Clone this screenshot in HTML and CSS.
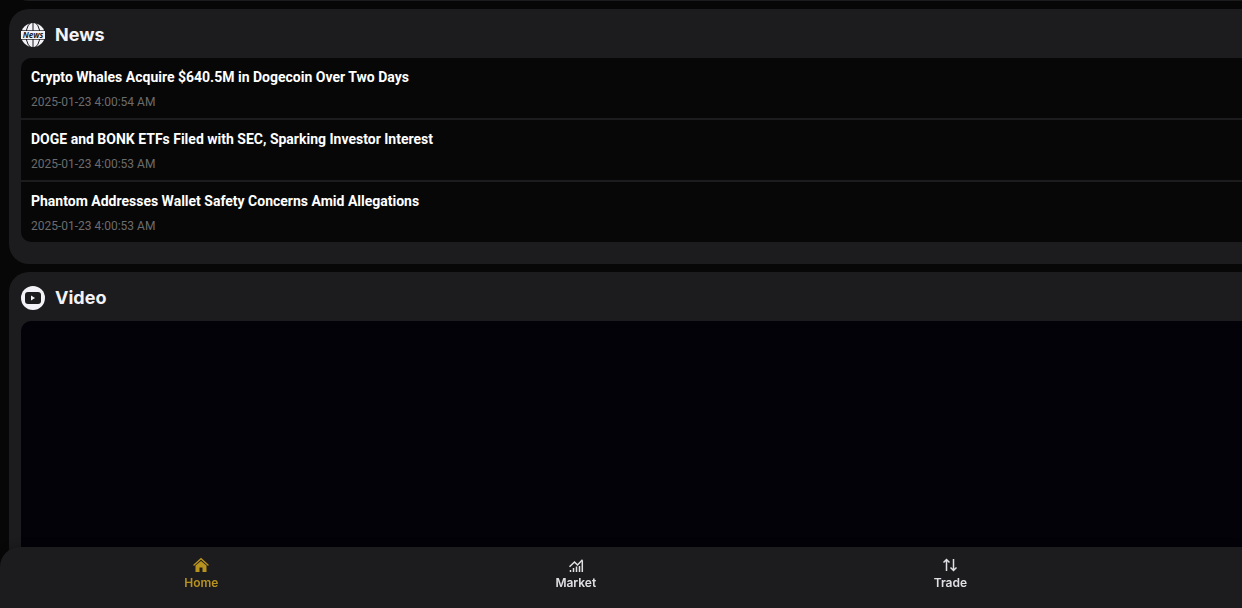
FILE: index.html
```html
<!DOCTYPE html>
<html lang="en">

<head>
    <meta charset="utf-8">
    <meta name="viewport" content="width=device-width, initial-scale=1">
    <title>Home</title>
    <link rel="stylesheet" href="styles.css">
</head>

<body>
    <main class="page">
        <div class="card card-previous"></div>

        <section class="card">
            <h2 class="card-title">
                <svg class="card-icon" viewBox="0 0 24 24" aria-hidden="true">
                    <circle cx="12" cy="12" r="12" fill="#f2f2f7" />
                    <g fill="none" stroke="#1c1c1e">
                        <path d="M12 0v24" />
                        <ellipse cx="12" cy="12" rx="7" ry="13" />
                    </g>
                    <rect y="7.300" width="24" height="9.400" fill="#1c1c1e" />
                    <rect y="8" width="24" height="8" fill="#f2f2f7" />
                    <text class="globe-text" x="12" y="15" text-anchor="middle">News</text>
                </svg>
                News
            </h2>
            <div class="news-list">
                <article class="news-item">
                    <h3>Crypto Whales Acquire $640.5M in Dogecoin Over Two Days</h3>
                    <time datetime="2025-01-23T04:00:54">2025-01-23 4:00:54 AM</time>
                </article>
                <article class="news-item">
                    <h3>DOGE and BONK ETFs Filed with SEC, Sparking Investor Interest</h3>
                    <time datetime="2025-01-23T04:00:53">2025-01-23 4:00:53 AM</time>
                </article>
                <article class="news-item">
                    <h3>Phantom Addresses Wallet Safety Concerns Amid Allegations</h3>
                    <time datetime="2025-01-23T04:00:53">2025-01-23 4:00:53 AM</time>
                </article>
            </div>
        </section>

        <section class="card card-video">
            <h2 class="card-title">
                <svg class="card-icon" viewBox="0 0 24 24" aria-hidden="true">
                    <circle cx="12" cy="12" r="12" fill="#f2f2f7" />
                    <rect x="4" y="6" width="16" height="12" rx="3" fill="#1c1c1e" />
                    <path d="M10 9.500v5l4-2.500z" fill="#f2f2f7" />
                </svg>
                Video
            </h2>
            <div class="video-box"></div>
        </section>
    </main>

    <nav class="tab-bar">
        <a class="tab active" href="#home">
            <svg viewBox="0 0 16 16" aria-hidden="true">
                <path d="M1 8L8 1.800 15 8" fill="none" stroke="currentColor" stroke-width="1.400" stroke-linecap="round" />
                <path d="M2.500 8.600L8 3.900l5.500 4.700V15H9.500v-4.500h-3V15h-4z" fill="currentColor" />
            </svg>
            Home
        </a>
        <a class="tab" href="#market">
            <svg viewBox="0 0 16 16" aria-hidden="true">
                <path d="M2.500 13v2M5.500 11v4M8.500 9.500V15M11.500 9v6M14.300 3.500V15" fill="none" stroke="currentColor" stroke-width="1.500" />
                <path d="M1.500 9.800L6.500 5l3 3 5-5.300" fill="none" stroke="currentColor" stroke-width="1.500" />
            </svg>
            Market
        </a>
        <a class="tab" href="#trade">
            <svg viewBox="0 0 16 16" aria-hidden="true">
                <path d="M4.500 14V2.500M1.500 5.500l3-3 3 3M11.500 2v11.500M8.500 10.500l3 3 3-3" fill="none" stroke="currentColor" stroke-width="1.500" />
            </svg>
            Trade
        </a>
    </nav>
</body>

</html>
```

FILE: styles.css
```css
* {
    box-sizing: border-box;
}

body {
    margin: 0;
    background: #070707;
    color: #f2f2f7;
    font-family: Inter, sans-serif;
}

h2,
h3 {
    margin: 0;
}

.page {
    display: flex;
    flex-direction: column;
    gap: 8px;
    min-height: 100vh;
    padding-left: 9px;
}

/* cards run off the right side of the window */
.card {
    padding: 0 0 22px 12px;
    background: #1c1c1e;
    border-radius: 20px 0 0 20px;
}

/* only the bottom edge of the card above stays in view */
.card-previous {
    height: 40px;
    margin-top: -39px;
}

.card-video {
    display: flex;
    flex: 1;
    flex-direction: column;
}

.card-title {
    display: flex;
    align-items: center;
    gap: 10px;
    height: 49px;
    padding-top: 2px;
    font-size: 18px;
    line-height: 22px;
    font-weight: 700;
}

.card-icon {
    width: 24px;
    height: 24px;
}

.globe-text {
    fill: #1c1c1e;
    font: italic 700 8px "Open Sans", sans-serif;
}

.news-list {
    background: #070707;
    border-radius: 10px 0 0 10px;
    font-family: Roboto, sans-serif;
}

.news-item {
    padding: 9px 10px 8px;
}

.news-item + .news-item {
    border-top: 2px solid #1c1c1e;
}

.news-item h3 {
    font-size: 14px;
    line-height: 20px;
    font-weight: 700;
    color: #fff;
}

.news-item time {
    display: block;
    margin-top: 7px;
    font-size: 12px;
    line-height: 16px;
    color: #6c6c6c;
}

.video-box {
    flex: 1;
    background: #020208;
    border-radius: 10px 0 0 0;
}

.tab-bar {
    position: fixed;
    left: 0;
    right: 0;
    bottom: 0;
    display: flex;
    height: 61px;
    padding: 10px 0 0 14px;
    background: #1c1c1e;
    border-radius: 20px 0 0 0;
    box-shadow: 0 0 10px rgba(0, 0, 0, 0.3);
}

.tab {
    display: flex;
    flex: 0 0 30.5%;
    flex-direction: column;
    align-items: center;
    gap: 1px;
    color: #e0e0e4;
    font-size: 12px;
    line-height: 18px;
    font-weight: 600;
    text-decoration: none;
}

.tab svg {
    width: 16px;
    height: 16px;
}

.tab.active {
    color: #b8921f;
}
```
